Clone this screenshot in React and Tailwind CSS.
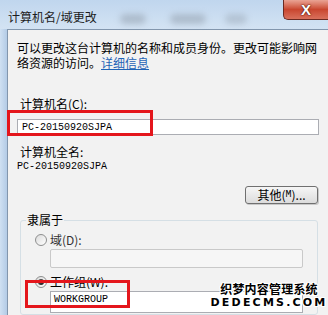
import React from "react";

const cjk = { fontFamily: '"Noto Sans CJK SC", "Noto Sans", sans-serif' };
const mono = { fontFamily: '"Liberation Mono", "DejaVu Sans Mono", monospace' };

function Radio({ checked }) {
  return (
    <span className="w-[12px] h-[12px] rounded-full border border-[#8e8f8f] bg-gradient-to-br from-[#dcdcdc] to-[#ffffff] flex items-center justify-center shrink-0">
      {checked && <span className="w-[6px] h-[6px] rounded-full bg-gradient-to-br from-[#5a5a5a] to-[#1a1a1a]" />}
    </span>
  );
}

export default function App() {
  return (
    <div className="relative w-[328px] h-[315px] overflow-hidden bg-[#c3d7ed] text-black" style={cjk}>
      {/* title bar */}
      <div className="relative h-[29px] flex items-start bg-gradient-to-b from-[#c0d6ee] to-[#d3e3f3]">
        <div className="pl-[8px] pt-[10px] text-[12px] leading-[14px] text-[#1c1c1c]">计算机名/域更改</div>
        <div className="absolute left-[120px] top-[14px] w-[26px] h-[10px] rounded-full bg-[#8e9aa8] opacity-50 blur-[3px]" />
        <div className="absolute left-[170px] top-[14px] w-[36px] h-[10px] rounded-full bg-[#8e9aa8] opacity-50 blur-[3px]" />
        <div className="absolute left-[225px] top-[14px] w-[22px] h-[10px] rounded-full bg-[#8e9aa8] opacity-40 blur-[3px]" />
        <div className="ml-auto w-[45px] h-[20px] rounded-bl-[5px] border-l border-b border-[#6b2a22] bg-gradient-to-b from-[#e9a394] via-[#c9462f] to-[#d8705c] flex items-center justify-center">
          <span className="text-white font-bold text-[15px] leading-[14px]" style={{ fontFamily: '"Liberation Sans", sans-serif', textShadow: "0 0 2px #4a1208, 0 0 1px #4a1208" }}>X</span>
        </div>
      </div>

      <div className="flex h-[286px]">
        <div className="w-[7px] bg-gradient-to-r from-[#cfe0f2] to-[#b3cbe6]" />
        <div className="flex-1 border-l border-t border-[#8296ad] bg-[#f2f2f2] flex flex-col">
          <p className="pl-[9px] mt-[10px] text-[12px] leading-[15px]">
            可以更改这台计算机的名称和成员身份。更改可能影响网<br />
            络资源的访问。<span className="text-[#1f63b6] underline">详细信息</span>
          </p>

          <div className="pl-[12px] mt-[27px] text-[12px] leading-[14px]">计算机名(C):</div>
          <div className="ml-[9px] mt-[8px] w-[302px] h-[16px] border border-[#abadb3] bg-white flex items-center pl-[4px] text-[10px]" style={mono}>
            PC-20150920SJPA
          </div>

          <div className="pl-[12px] mt-[10px] text-[12px] leading-[14px]">计算机全名:</div>
          <div className="pl-[9px] mt-[1px] text-[10px] leading-[14px]" style={mono}>PC-20150920SJPA</div>

          <div className="mt-[12px] mr-[10px] ml-auto w-[73px] h-[18px] rounded-[3px] border border-[#707070] bg-gradient-to-b from-[#f6f6f6] to-[#dcdcdc] flex items-center justify-center text-[12px] leading-[14px] shadow-[1px_1px_0_#c8c8c8]">
            其他(<span style={mono} className="text-[10px]">M</span>)...
          </div>

          <fieldset className="mt-[9px] ml-[12px] mr-[10px] border border-[#d5dfe5] rounded-[3px] flex-1">
            <legend className="ml-[5px] px-[1px] text-[12px] leading-[14px]">隶属于</legend>
            <div className="flex items-center gap-[3px] pl-[14px] mt-[6px] text-[12px] leading-[14px] text-[#333]">
              <Radio />
              <span>域(D):</span>
            </div>
            <div className="ml-[29px] mt-[2px] w-[253px] h-[19px] border border-[#c9c9c9] rounded-[2px] bg-[#f6f6f6]" />
            <div className="flex items-center gap-[3px] pl-[14px] mt-[7px] text-[12px] leading-[14px]">
              <Radio checked />
              <span>工作组(W):</span>
            </div>
            <div className="ml-[29px] mt-[2px] w-[253px] h-[22px] border border-[#abadb3] bg-white flex items-start pl-[3px] pt-[2px] text-[10px] leading-[12px]" style={mono}>
              WORKGROUP
            </div>
          </fieldset>
        </div>
      </div>

      {/* annotation boxes */}
      <div className="absolute left-[7px] top-[110px] w-[146px] h-[26px] border-[3px] border-[#e4161c]" />
      <div className="absolute left-[25px] top-[280px] w-[105px] h-[28px] border-[3px] border-[#e4161c]" />

      {/* watermark */}
      <div className="absolute left-[219px] top-[281px] w-[100px] flex flex-col items-center text-black font-bold" style={{ textShadow: "1px 0 0 #fff, -1px 0 0 #fff, 0 1px 0 #fff, 0 -1px 0 #fff, 1px 1px 0 #fff, -1px -1px 0 #fff, 1px -1px 0 #fff, -1px 1px 0 #fff" }}>
        <div className="text-[12px] leading-[15px] tracking-[0.2px]">织梦内容管理系统</div>
        <div className="text-[11px] leading-[14px] tracking-[2.2px]" style={{ fontFamily: '"DejaVu Sans", sans-serif' }}>DEDECMS.COM</div>
      </div>
    </div>
  );
}
